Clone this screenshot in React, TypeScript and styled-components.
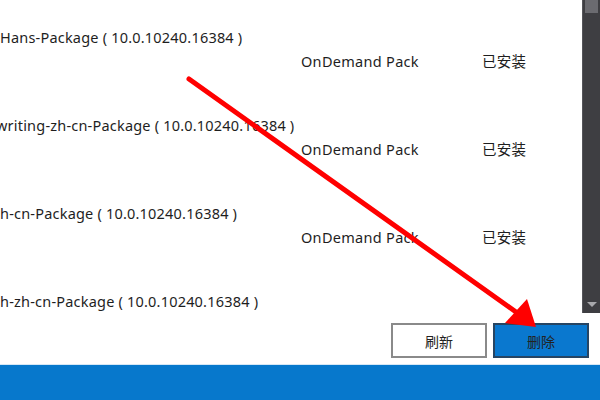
import React from "react";
import styled, { createGlobalStyle } from "styled-components";

const Global = createGlobalStyle`
  html, body { margin: 0; padding: 0; background: #ffffff; }
  body { font-family: "Noto Sans", "Noto Sans CJK SC", sans-serif; }
`;

const Page = styled.div`
  position: relative;
  width: 600px;
  height: 400px;
  display: flex;
  flex-direction: column;
  overflow: hidden;
  background: #ffffff;
`;

const Content = styled.div`
  display: flex;
  height: 313px;
`;

const List = styled.div`
  flex: 1;
  overflow: hidden;
  padding-top: 25px;
  display: flex;
  flex-direction: column;
`;

const Row = styled.div`
  height: 88px;
  flex: none;
  display: flex;
  flex-direction: column;
  font-size: 14.5px;
  line-height: 24px;
  color: #1e1e1e;
`;

const Name = styled.div<{ $indent: number }>`
  white-space: nowrap;
  text-indent: ${(p) => p.$indent}px;
  letter-spacing: 0.2px;
`;

const Details = styled.div`
  display: grid;
  grid-template-columns: 301px 181px auto;
  white-space: nowrap;
`;

const Cell = styled.div`
  letter-spacing: 0.3px;
`;

const Scrollbar = styled.div`
  width: 18px;
  background: #3e3e42;
  border-left: 1px solid #55555a;
  display: flex;
  flex-direction: column;
  justify-content: space-between;
  align-items: center;
  box-sizing: border-box;
  padding-bottom: 6px;
`;

const Thumb = styled.div`
  width: 13px;
  height: 13px;
  background: #6b6b70;
`;

const DownArrow = styled.div`
  width: 0;
  height: 0;
  border-left: 5px solid transparent;
  border-right: 5px solid transparent;
  border-top: 5px solid #a8a8ac;
`;

const ButtonBar = styled.div`
  height: 51px;
  display: flex;
  justify-content: flex-end;
  align-items: flex-start;
  gap: 6px;
  padding: 10px 11px 0 0;
  box-sizing: border-box;
`;

const Button = styled.button<{ $primary?: boolean }>`
  width: 96px;
  height: 35px;
  box-sizing: border-box;
  font-family: "Noto Sans CJK SC", sans-serif;
  font-size: 14px;
  color: #222222;
  background: ${(p) => (p.$primary ? "#0a78cf" : "#ffffff")};
  border: ${(p) => (p.$primary ? "2px solid #274563" : "2px solid #8a8a8a")};
  padding: 0;
  cursor: pointer;
`;

const Footer = styled.div`
  flex: 1;
  background: #0778cc;
  border-top: 1px solid #d6e8f6;
`;

const Overlay = styled.svg`
  position: absolute;
  left: 0;
  top: 0;
  pointer-events: none;
`;

const rows = [
  { name: "Hans-Package ( 10.0.10240.16384 )", indent: 0, detail: true },
  { name: "writing-zh-cn-Package ( 10.0.10240.16384 )", indent: -4, detail: true },
  { name: "h-cn-Package ( 10.0.10240.16384 )", indent: 0, detail: true },
  { name: "h-zh-cn-Package ( 10.0.10240.16384 )", indent: 0, detail: false },
];

export default function App() {
  return (
    <>
      <Global />
      <Page>
        <Content>
          <List>
            {rows.map((r, i) => (
              <Row key={i}>
                <Name $indent={r.indent}>{r.name}</Name>
                {r.detail && (
                  <Details>
                    <span />
                    <Cell>OnDemand Pack</Cell>
                    <Cell>已安装</Cell>
                  </Details>
                )}
              </Row>
            ))}
          </List>
          <Scrollbar>
            <Thumb />
            <DownArrow />
          </Scrollbar>
        </Content>
        <ButtonBar>
          <Button>刷新</Button>
          <Button $primary>删除</Button>
        </ButtonBar>
        <Footer />
        <Overlay width="600" height="400" viewBox="0 0 600 400">
          <line x1="189" y1="79" x2="516" y2="312" stroke="#ff0000" strokeWidth="5" strokeLinecap="round" />
          <polygon points="505,323 527,299 536,327" fill="#ff0000" />
        </Overlay>
      </Page>
    </>
  );
}
